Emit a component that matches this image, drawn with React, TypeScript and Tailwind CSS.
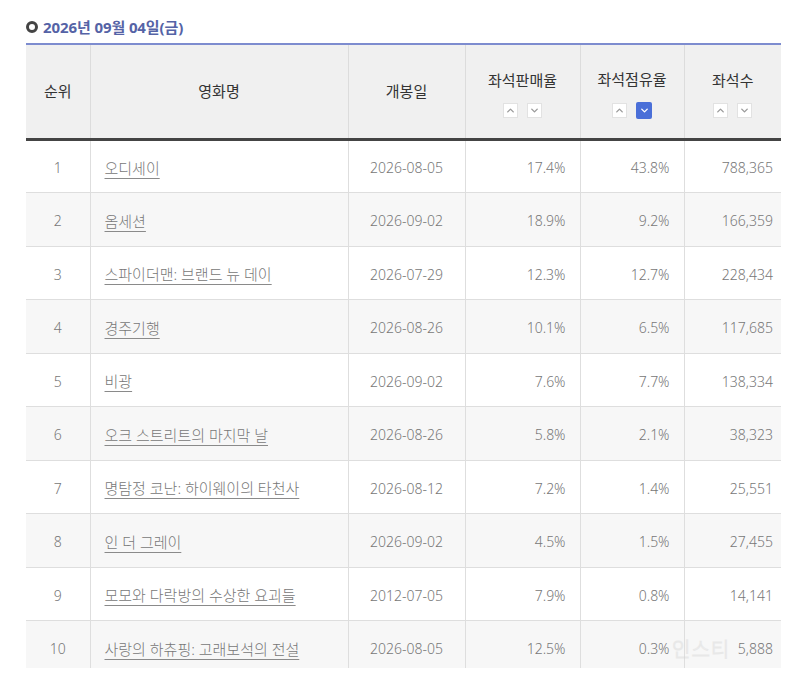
import { ChevronUp, ChevronDown } from 'lucide-react';

type Row = { rank: number; title: string; open: string; sales: string; share: string; seats: string };

const rows: Row[] = [
  { rank: 1, title: '오디세이', open: '2026-08-05', sales: '17.4%', share: '43.8%', seats: '788,365' },
  { rank: 2, title: '옴세션', open: '2026-09-02', sales: '18.9%', share: '9.2%', seats: '166,359' },
  { rank: 3, title: '스파이더맨: 브랜드 뉴 데이', open: '2026-07-29', sales: '12.3%', share: '12.7%', seats: '228,434' },
  { rank: 4, title: '경주기행', open: '2026-08-26', sales: '10.1%', share: '6.5%', seats: '117,685' },
  { rank: 5, title: '비광', open: '2026-09-02', sales: '7.6%', share: '7.7%', seats: '138,334' },
  { rank: 6, title: '오크 스트리트의 마지막 날', open: '2026-08-26', sales: '5.8%', share: '2.1%', seats: '38,323' },
  { rank: 7, title: '명탐정 코난: 하이웨이의 타천사', open: '2026-08-12', sales: '7.2%', share: '1.4%', seats: '25,551' },
  { rank: 8, title: '인 더 그레이', open: '2026-09-02', sales: '4.5%', share: '1.5%', seats: '27,455' },
  { rank: 9, title: '모모와 다락방의 수상한 요괴들', open: '2012-07-05', sales: '7.9%', share: '0.8%', seats: '14,141' },
  { rank: 10, title: '사랑의 하츄핑: 고래보석의 전설', open: '2026-08-05', sales: '12.5%', share: '0.3%', seats: '5,888' },
];

function SortButtons({ active }: { active?: 'down' }) {
  return (
    <div className="flex justify-center items-center gap-[9px] mt-[11px]">
      <span className="w-[15px] h-[15px] bg-white border border-[#e2e2e2] flex items-center justify-center">
        <ChevronUp size={11} strokeWidth={3} className="text-[#9a9a9a]" />
      </span>
      {active === 'down' ? (
        <span className="w-[16px] h-[17px] bg-[#4a6fd8] rounded-[2px] flex items-center justify-center">
          <ChevronDown size={11} strokeWidth={3} className="text-white" />
        </span>
      ) : (
        <span className="w-[15px] h-[15px] bg-white border border-[#e2e2e2] flex items-center justify-center">
          <ChevronDown size={11} strokeWidth={3} className="text-[#9a9a9a]" />
        </span>
      )}
    </div>
  );
}

export default function App() {
  return (
    <div
      className="w-[800px] h-[691px] bg-white pl-[26px] pr-[19px] pt-[17px] relative overflow-hidden"
      style={{ fontFamily: '"Noto Sans", "Noto Sans CJK KR", sans-serif' }}
    >
      <div className="flex items-center gap-[5px] h-[20px]">
        <span className="w-[12px] h-[12px] rounded-full border-[3px] border-[#444]" />
        <span className="text-[15px] font-bold text-[#5563a6] tracking-[-0.1px]">2026년 09월 04일(금)</span>
      </div>
      <div className="mt-[6px] h-[625px] overflow-hidden border-t-2 border-[#7d8ccf]">
        <table className="w-[755px] table-fixed border-collapse text-[14px] font-light text-[#777]">
          <colgroup>
            <col className="w-[64px]" />
            <col className="w-[258px]" />
            <col className="w-[117px]" />
            <col className="w-[115px]" />
            <col className="w-[104px]" />
            <col className="w-[97px]" />
          </colgroup>
          <thead>
            <tr className="h-[94px] bg-[#f0f0f0] text-[#333] text-[15px] border-b-[3px] border-[#444]">
              <th className="font-normal">순위</th>
              <th className="font-normal border-l border-[#dcdcdc]">영화명</th>
              <th className="font-normal border-l border-[#dcdcdc]">개봉일</th>
              <th className="font-normal border-l border-[#dcdcdc] pt-[4px]">
                <div>좌석판매율</div>
                <SortButtons />
              </th>
              <th className="font-normal border-l border-[#dcdcdc] pt-[4px]">
                <div>좌석점유율</div>
                <SortButtons active="down" />
              </th>
              <th className="font-normal border-l border-[#dcdcdc] pt-[4px]">
                <div>좌석수</div>
                <SortButtons />
              </th>
            </tr>
          </thead>
          <tbody>
            {rows.map((r, i) => (
              <tr key={r.rank} className={`h-[53.5px] border-b border-[#dedede] ${i % 2 === 1 ? 'bg-[#f7f7f7]' : 'bg-white'}`}>
                <td className="text-center pt-[3px]">{r.rank}</td>
                <td className="border-l border-[#dedede] pl-[14px] pt-[3px] text-[15px]">
                  <span className="underline underline-offset-[4px] decoration-[#8a8a8a] text-[#777]">{r.title}</span>
                </td>
                <td className="border-l border-[#dedede] text-center pt-[3px]">{r.open}</td>
                <td className="border-l border-[#dedede] text-right pr-[14px] pt-[3px]">{r.sales}</td>
                <td className="border-l border-[#dedede] text-right pr-[14px] pt-[3px]">{r.share}</td>
                <td className="border-l border-[#dedede] text-right pr-[8px] pt-[3px]">{r.seats}</td>
              </tr>
            ))}
          </tbody>
        </table>
      </div>
      <span className="absolute left-[672px] top-[640px] text-[20px] leading-none font-light text-transparent opacity-40 [-webkit-text-stroke:1px_#d4d4d4] tracking-[1px]">
        인스티
      </span>
    </div>
  );
}
